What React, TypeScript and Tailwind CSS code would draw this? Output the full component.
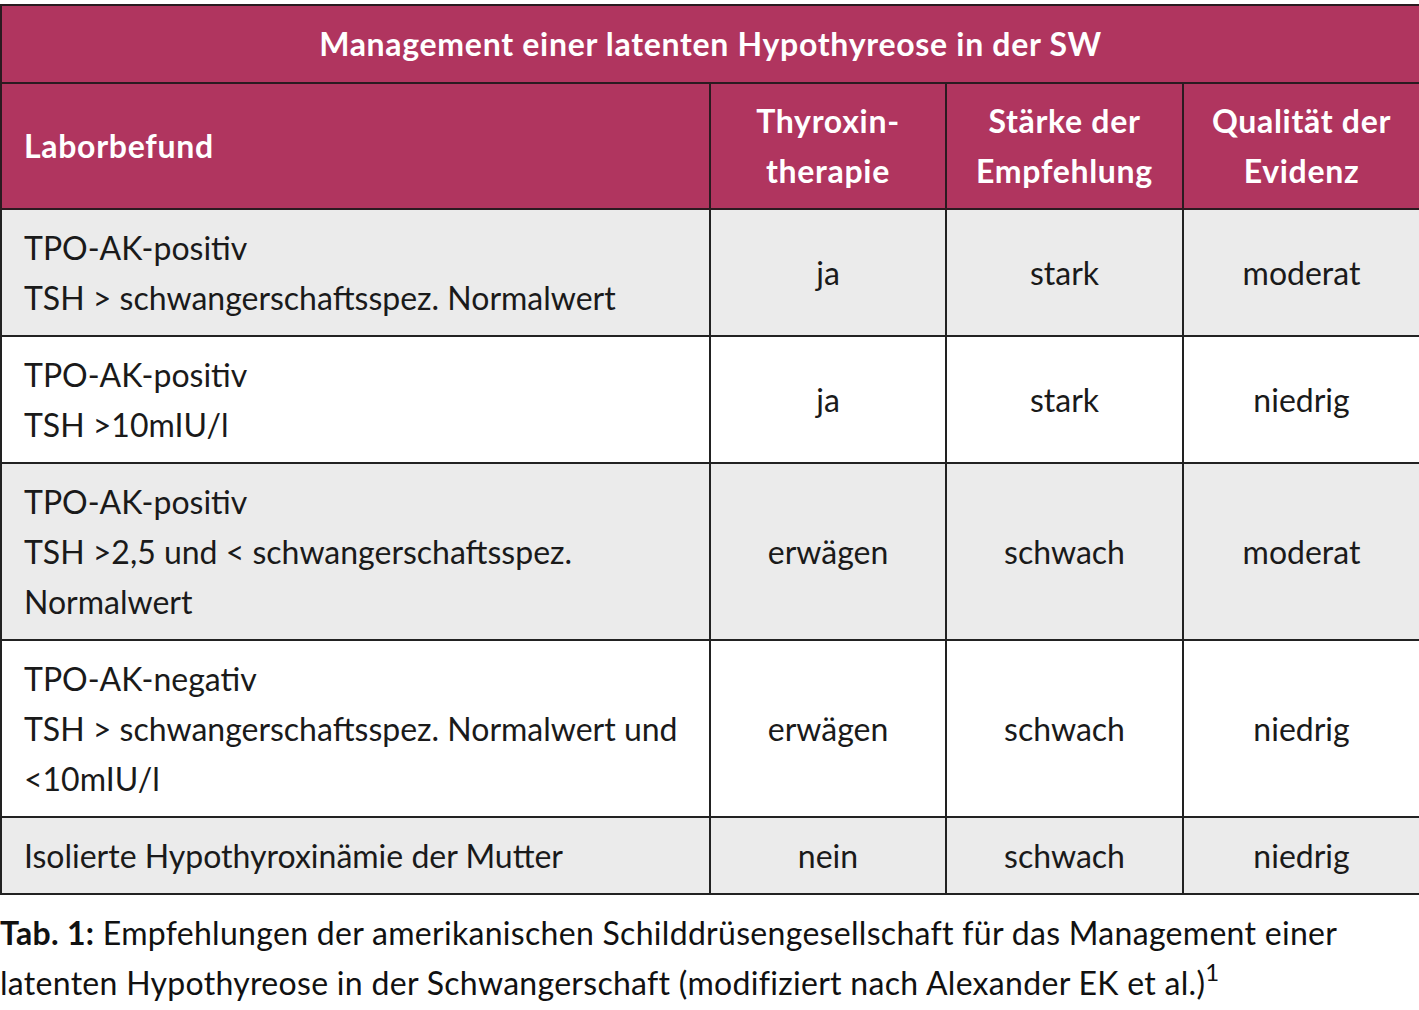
import React from 'react';

const rows = [
  { befund: ['TPO-AK-positiv', 'TSH > schwangerschaftsspez. Normalwert'], therapie: 'ja', staerke: 'stark', evidenz: 'moderat', gray: true },
  { befund: ['TPO-AK-positiv', 'TSH >10mIU/l'], therapie: 'ja', staerke: 'stark', evidenz: 'niedrig', gray: false },
  { befund: ['TPO-AK-positiv', 'TSH >2,5 und < schwangerschaftsspez.', 'Normalwert'], therapie: 'erwägen', staerke: 'schwach', evidenz: 'moderat', gray: true },
  { befund: ['TPO-AK-negativ', 'TSH > schwangerschaftsspez. Normalwert und', '<10mIU/l'], therapie: 'erwägen', staerke: 'schwach', evidenz: 'niedrig', gray: false },
  { befund: ['Isolierte Hypothyroxinämie der Mutter'], therapie: 'nein', staerke: 'schwach', evidenz: 'niedrig', gray: true },
];

export default function App() {
  return (
    <div className="w-[1419px] bg-white pt-[4px] text-[#1a1a1a]" style={{ fontFamily: 'Lato, "Noto Sans", sans-serif' }}>
      <table className="w-[1419px] border-collapse table-fixed text-[32px] leading-[50px]">
        <colgroup>
          <col className="w-[709px]" />
          <col className="w-[236px]" />
          <col className="w-[237px]" />
          <col className="w-[237px]" />
        </colgroup>
        <thead>
          <tr className="bg-[#b0355f] text-white font-bold tracking-[0.7px]">
            <th colSpan={4} className="h-[78px] border-2 border-[#2a1a20] text-center text-[32px] font-bold">
              Management einer latenten Hypothyreose in der SW
            </th>
          </tr>
          <tr className="bg-[#b0355f] text-white tracking-[0.7px]">
            <th className="h-[126px] border-2 border-[#2a1a20] px-[22px] text-left font-bold">Laborbefund</th>
            <th className="border-2 border-[#2a1a20] text-center font-bold">Thyroxin-<br />therapie</th>
            <th className="border-2 border-[#2a1a20] text-center font-bold">Stärke der<br />Empfehlung</th>
            <th className="border-2 border-[#2a1a20] text-center font-bold">Qualität der<br />Evidenz</th>
          </tr>
        </thead>
        <tbody>
          {rows.map((r, i) => (
            <tr key={i} className={r.gray ? 'bg-[#ebebeb]' : 'bg-white'}>
              <td className="border-2 border-[#222] px-[22px] py-[12.5px] text-left align-middle">
                {r.befund.map((l, j) => (
                  <div key={j}>{l}</div>
                ))}
              </td>
              <td className="border-2 border-[#222] text-center align-middle">{r.therapie}</td>
              <td className="border-2 border-[#222] text-center align-middle">{r.staerke}</td>
              <td className="border-2 border-[#222] text-center align-middle">{r.evidenz}</td>
            </tr>
          ))}
        </tbody>
      </table>
      <p className="mt-[13px] text-[32px] leading-[50px] tracking-[0.3px] text-[#111]">
        <span className="font-bold">Tab. 1:</span> Empfehlungen der amerikanischen Schilddrüsengesellschaft für das Management einer
        <br />
        latenten Hypothyreose in der Schwangerschaft (modifiziert nach Alexander EK et al.)
        <span className="relative top-[-14px] text-[24px] leading-none">1</span>
      </p>
    </div>
  );
}
